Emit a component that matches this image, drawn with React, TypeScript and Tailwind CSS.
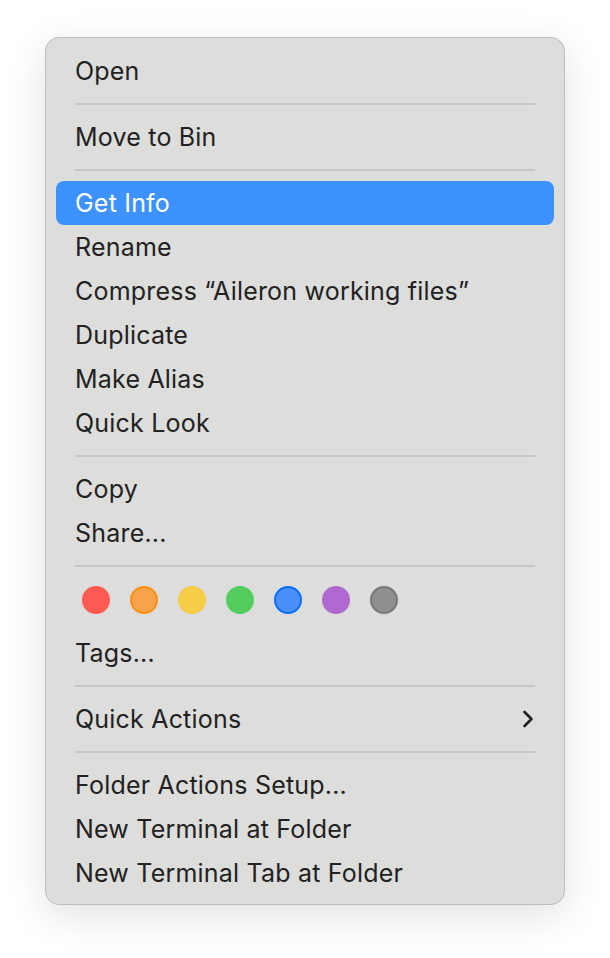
import React from 'react';

const dots = [
  { fill: 'bg-[#fe5a52]', ring: 'border-[#fe5a52]' },
  { fill: 'bg-[#f8a24c]', ring: 'border-[#f88f13]' },
  { fill: 'bg-[#f7cc48]', ring: 'border-[#f7cc48]' },
  { fill: 'bg-[#53cd5d]', ring: 'border-[#53cd5d]' },
  { fill: 'bg-[#4a8ef8]', ring: 'border-[#0d6ff8]' },
  { fill: 'bg-[#b069d0]', ring: 'border-[#b069d0]' },
  { fill: 'bg-[#8f8f8f]', ring: 'border-[#7a7a7a]' },
];

function Item({ label, active = false, children }: { label: string; active?: boolean; children?: React.ReactNode }) {
  return (
    <div
      className={`mx-[10px] flex h-[44px] items-center justify-between rounded-[8px] pl-[19px] pr-[20px] ${
        active ? 'bg-[#3d92fe] text-white' : 'text-[#222222]'
      }`}
    >
      <span>{label}</span>
      {children}
    </div>
  );
}

function Sep() {
  return (
    <div className="flex h-[22px] items-center px-[29px]">
      <div className="h-[2px] w-full bg-[#c6c6c5]" />
    </div>
  );
}

export default function App() {
  return (
    <div className="flex min-h-[958px] w-full items-start justify-center bg-white pt-[37px]">
      <div
        className="w-[520px] rounded-[14px] border border-[#bdbdbc] bg-[#dddddc] pb-[9px] pt-[11px] text-[25px] leading-none tracking-[0.2px] shadow-[0_10px_40px_rgba(0,0,0,0.12)]"
        style={{ fontFamily: 'Inter, "Noto Sans", sans-serif' }}
      >
        <Item label="Open" />
        <Sep />
        <Item label="Move to Bin" />
        <Sep />
        <Item label="Get Info" active />
        <Item label="Rename" />
        <Item label="Compress “Aileron working files”" />
        <Item label="Duplicate" />
        <Item label="Make Alias" />
        <Item label="Quick Look" />
        <Sep />
        <Item label="Copy" />
        <Item label="Share..." />
        <Sep />
        <div className="flex h-[54px] items-center gap-[20px] px-[36px] pb-[8px]">
          {dots.map((d, i) => (
            <div key={i} className={`h-[28px] w-[28px] rounded-full border-2 ${d.fill} ${d.ring}`} />
          ))}
        </div>
        <Item label="Tags..." />
        <Sep />
        <Item label="Quick Actions">
          <svg width="12" height="18" viewBox="0 0 12 18">
            <path d="M2.5 2 L9.5 9 L2.5 16" fill="none" stroke="#222" strokeWidth="2.6" strokeLinecap="round" strokeLinejoin="round" />
          </svg>
        </Item>
        <Sep />
        <Item label="Folder Actions Setup..." />
        <Item label="New Terminal at Folder" />
        <Item label="New Terminal Tab at Folder" />
      </div>
    </div>
  );
}
